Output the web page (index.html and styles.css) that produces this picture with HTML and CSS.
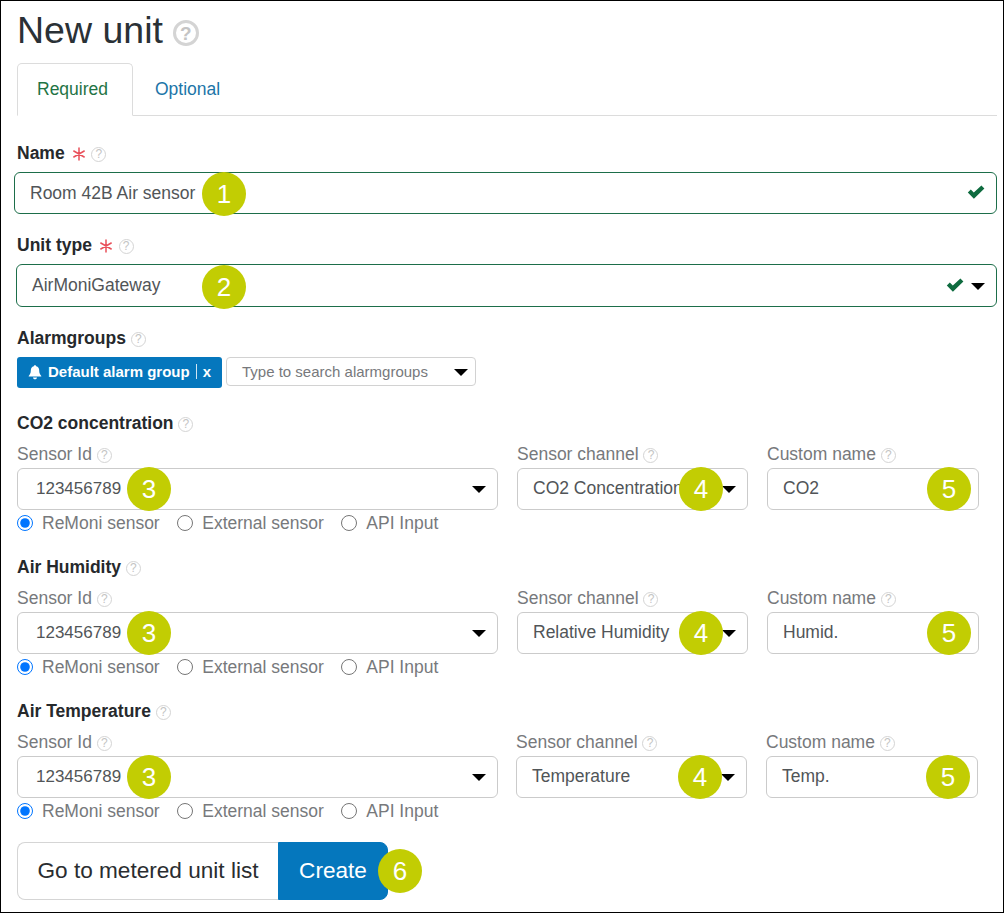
FILE: index.html
```html
<!DOCTYPE html>
<html lang="en">
<head>
<meta charset="utf-8">
<title>New unit</title>
<link rel="stylesheet" href="styles.css">
</head>
<body>
<svg class="defs" width="0" height="0" aria-hidden="true">
  <defs>
    <symbol id="req" viewBox="0 0 14 14">
      <g stroke="#e9505a" stroke-width="1.5" stroke-linecap="round">
        <path d="M7 1v12M1.8 4l10.4 6M1.8 10l10.4-6"/>
      </g>
    </symbol>
    <symbol id="check" viewBox="0 0 18 14">
      <path d="M.8 7.600l3-3 3 3L14.400.4 17.400 3.400 6.900 13.800z" fill="#0e6b3f"/>
    </symbol>
  </defs>
</svg>
<main class="frame">
  <h1 class="title">New unit <span class="help help-lg">?</span></h1>
  <nav class="tabs">
    <a class="tab tab-active">Required</a>
    <a class="tab">Optional</a>
  </nav>

  <div class="label label-name">Name <svg class="req"><use href="#req"/></svg> <span class="help">?</span></div>
  <div class="control control-name valid">
    <span class="value">Room 42B Air sensor</span>
    <svg class="check"><use href="#check"/></svg>
    <span class="badge badge-1">1</span>
  </div>

  <div class="label label-next">Unit type <svg class="req"><use href="#req"/></svg> <span class="help">?</span></div>
  <div class="control control-type valid">
    <span class="value">AirMoniGateway</span>
    <svg class="check"><use href="#check"/></svg>
    <span class="caret"></span>
    <span class="badge badge-2">2</span>
  </div>

  <div class="label label-next">Alarmgroups <span class="help">?</span></div>
  <div class="alarm-row">
    <span class="tag">
      <svg class="bell" viewBox="0 0 16 16"><path d="M8 1.200c.7 0 1.200.5 1.200 1.100 2 .5 3 2.200 3 4.300 0 2.600.7 3.900 2.100 5.300v.7H1.700v-.7C3.100 10.500 3.800 9.200 3.800 6.600c0-2.100 1-3.800 3-4.300C6.800 1.700 7.300 1.200 8 1.200zM6 13.400h4c0 1.100-.9 1.800-2 1.800s-2-.7-2-1.800z" fill="#fff"/></svg>
      <span>Default alarm group</span><span class="tag-sep"></span><span>x</span>
    </span>
    <div class="search"><span>Type to search alarmgroups</span><span class="caret"></span></div>
  </div>

  <section class="sensor">
    <div class="label">CO2 concentration <span class="help">?</span></div>
    <div class="sensor-grid">
      <div class="col">
        <div class="sublabel">Sensor Id <span class="help">?</span></div>
        <div class="control control-id"><span class="value">123456789</span><span class="caret"></span><span class="badge badge-3">3</span></div>
      </div>
      <div class="col">
        <div class="sublabel">Sensor channel <span class="help">?</span></div>
        <div class="control control-channel"><span class="value">CO2 Concentration</span><span class="caret"></span><span class="badge badge-4">4</span></div>
      </div>
      <div class="col">
        <div class="sublabel">Custom name <span class="help">?</span></div>
        <div class="control control-custom"><span class="value">CO2</span><span class="badge badge-5">5</span></div>
      </div>
    </div>
    <div class="radios">
      <label class="radio"><input type="radio" name="r1" checked>ReMoni sensor</label>
      <label class="radio"><input type="radio" name="r1">External sensor</label>
      <label class="radio"><input type="radio" name="r1">API Input</label>
    </div>
  </section>

  <section class="sensor">
    <div class="label">Air Humidity <span class="help">?</span></div>
    <div class="sensor-grid">
      <div class="col">
        <div class="sublabel">Sensor Id <span class="help">?</span></div>
        <div class="control control-id"><span class="value">123456789</span><span class="caret"></span><span class="badge badge-3">3</span></div>
      </div>
      <div class="col">
        <div class="sublabel">Sensor channel <span class="help">?</span></div>
        <div class="control control-channel"><span class="value">Relative Humidity</span><span class="caret"></span><span class="badge badge-4">4</span></div>
      </div>
      <div class="col">
        <div class="sublabel">Custom name <span class="help">?</span></div>
        <div class="control control-custom"><span class="value">Humid.</span><span class="badge badge-5">5</span></div>
      </div>
    </div>
    <div class="radios">
      <label class="radio"><input type="radio" name="r2" checked>ReMoni sensor</label>
      <label class="radio"><input type="radio" name="r2">External sensor</label>
      <label class="radio"><input type="radio" name="r2">API Input</label>
    </div>
  </section>

  <section class="sensor">
    <div class="label">Air Temperature <span class="help">?</span></div>
    <div class="sensor-grid sensor-grid-shift">
      <div class="col">
        <div class="sublabel">Sensor Id <span class="help">?</span></div>
        <div class="control control-id"><span class="value">123456789</span><span class="caret"></span><span class="badge badge-3">3</span></div>
      </div>
      <div class="col">
        <div class="sublabel">Sensor channel <span class="help">?</span></div>
        <div class="control control-channel"><span class="value">Temperature</span><span class="caret"></span><span class="badge badge-4">4</span></div>
      </div>
      <div class="col">
        <div class="sublabel">Custom name <span class="help">?</span></div>
        <div class="control control-custom"><span class="value">Temp.</span><span class="badge badge-5">5</span></div>
      </div>
    </div>
    <div class="radios">
      <label class="radio"><input type="radio" name="r3" checked>ReMoni sensor</label>
      <label class="radio"><input type="radio" name="r3">External sensor</label>
      <label class="radio"><input type="radio" name="r3">API Input</label>
    </div>
  </section>

  <div class="actions">
    <button class="btn btn-back" type="button">Go to metered unit list</button>
    <button class="btn btn-create" type="button">Create</button>
    <span class="badge badge-6">6</span>
  </div>
</main>
</body>
</html>
```
FILE: styles.css
```css
* { box-sizing: border-box; }
html, body { margin: 0; padding: 0; background: #fff; }
body { font-family: "Liberation Sans", Arial, sans-serif; font-size: 17.5px; color: #23282d; }
.defs { display: block; height: 0; }
.frame {
  width: 1004px;
  height: 913px;
  border: 1px solid #000;
  padding: 8px 6px 0 16px;
  overflow: hidden;
}
.title {
  margin: 0 0 10px;
  height: 44px;
  padding-bottom: 2px;
  font-size: 37.500px;
  line-height: 42px;
  font-weight: 400;
  color: #2a3136;
  display: flex;
  align-items: center;
  gap: 10px;
}
.help {
  display: inline-flex;
  align-items: center;
  justify-content: center;
  width: 15px;
  height: 15px;
  border: 1.5px solid #d4d4d4;
  border-radius: 50%;
  color: #c4c4c4;
  font-size: 12px;
  font-weight: 400;
  line-height: 1;
  vertical-align: 1px;
}
.help-lg { width: 26px; height: 26px; border-width: 3px; font-size: 19px; font-weight: 700; margin-top: 6px; }
.tabs { display: flex; gap: 1px; height: 53px; border-bottom: 1px solid #dcdcdc; }
.tab {
  height: 53px;
  padding: 0 21px;
  display: flex;
  align-items: center;
  color: #1c75a8;
  font-size: 17.500px;
}
.tab-active {
  width: 116px;
  padding: 0 19px;
  color: #1f7445;
  background: #fff;
  border: 1px solid #dcdcdc;
  border-bottom-color: #fff;
  border-radius: 5px 5px 0 0;
}
.label { font-weight: 700; line-height: 20px; height: 20px; color: #26292c; font-size: 17.500px; }
.label-name { margin-top: 27px; }
.label-next { margin-top: 21px; }
.req { width: 14px; height: 14px; margin: 0 1px 0 2px; vertical-align: -2px; }
.sublabel { line-height: 20px; height: 20px; color: #77797c; font-size: 17.500px; margin-bottom: 4px; }

.control {
  position: relative;
  display: flex;
  align-items: center;
  height: 42px;
  background: #fff;
  border: 1px solid #cbcbcb;
  border-radius: 6px;
  padding: 0 15px;
  color: #515558;
}
.value { white-space: nowrap; font-size: 17.500px; }
.valid { border-color: #1d6e4a; }
.control-name { margin: 9px 0 0 -3px; width: 983px; padding-top: 1px; }
.control-type { margin: 9px 0 0 -1px; width: 981px; height: 43px; }
.control-channel, .control-custom { padding-bottom: 2px; }
.control-id { padding-left: 18px; }
.control-id .value { font-size: 17px; }
.check { width: 18px; height: 14px; position: absolute; top: 50%; margin-top: -8px; right: 11px; }
.control-type .check { right: 32px; }
.caret {
  position: absolute;
  top: 50%;
  margin-top: -3px;
  right: 11px;
  width: 0;
  height: 0;
  border-left: 7px solid transparent;
  border-right: 7px solid transparent;
  border-top: 7px solid #000;
}
.badge {
  position: absolute;
  width: 44px;
  height: 44px;
  border-radius: 50%;
  background: #c2cd03;
  color: #fff;
  font-size: 26px;
  display: flex;
  align-items: center;
  justify-content: center;
  top: -2px;
}
.badge-1 { left: 187px; top: -1px; }
.badge-2 { left: 185px; top: 0; }
.badge-3 { left: 109px; }
.badge-4 { left: 161px; top: -2px; }
.badge-5 { left: 159px; }
.badge-6 { left: 361px; top: 7px; }

.alarm-row { display: flex; align-items: flex-start; gap: 4px; margin-top: 9px; }
.tag {
  display: flex;
  align-items: center;
  width: 205px;
  height: 31px;
  padding: 0 0 2px 10px;
  background: #0577bd;
  color: #fff;
  font-weight: 700;
  font-size: 15px;
  border-radius: 3px;
  white-space: nowrap;
}
.bell { width: 16px; height: 16px; margin-right: 5px; }
.tag-sep { width: 1px; height: 15px; background: #cfe5f3; margin: 0 6px; }
.search {
  position: relative;
  width: 250px;
  height: 29px;
  border: 1px solid #d2d2d2;
  border-radius: 4px;
  padding-left: 15px;
  display: flex;
  align-items: center;
  color: #77797c;
  font-size: 15px;
}
.search .caret { right: 7px; }

.sensor { margin-top: 24px; }
.sensor:first-of-type { margin-top: 25px; }
.sensor-grid { display: grid; grid-template-columns: 481px 231px 212px; column-gap: 19px; margin-top: 11px; }
.sensor-grid-shift .col + .col { margin-left: -1px; margin-right: 1px; }
.radios { display: flex; gap: 17.500px; margin-top: 3px; height: 20px; align-items: center; }
.radio { display: flex; align-items: center; color: #77797c; font-size: 17.500px; white-space: nowrap; }
.radio input { width: 16px; height: 16px; margin: 0 9px 0 0; accent-color: #0075ff; }

.actions { position: relative; display: flex; margin-top: 21px; height: 58px; }
.btn {
  height: 58px;
  font-family: inherit;
  font-size: 22.600px;
  border: 1px solid #d5d5d5;
  padding: 0;
  background: #fff;
  color: #2a2d30;
}
.btn-back { width: 261px; border-right: 0; border-radius: 8px 0 0 8px; }
.btn-create { width: 110px; background: #0577bd; border-color: #0577bd; color: #fff; border-radius: 0 8px 8px 0; }
```
